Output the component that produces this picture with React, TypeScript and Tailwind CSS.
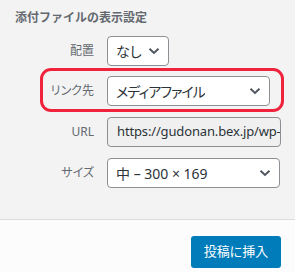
const font = "font-['Noto_Sans','Noto_Sans_CJK_JP',sans-serif]";
const palt = "[font-feature-settings:'palt']";

function Chevron() {
  return (
    <svg width="12" height="8" viewBox="0 0 12 8" className="shrink-0">
      <path d="M1.5 1.8 L6 6 L10.5 1.8" fill="none" stroke="#50575e" strokeWidth="2" />
    </svg>
  );
}

function Select({ value, width, tight = false }: { value: string; width: string; tight?: boolean }) {
  return (
    <div
      className={`flex h-[30px] ${width} items-center justify-between rounded-[4px] border border-[#8c8f94] bg-white pl-[8px] pr-[8px] text-[14px] text-[#2c3338] ${palt}`}
    >
      <span className={`truncate ${tight ? "tracking-[-1px]" : ""}`}>{value}</span>
      <Chevron />
    </div>
  );
}

function Row({ label, children, className = "" }: { label: string; children: React.ReactNode; className?: string }) {
  return (
    <div className={`flex items-center ${className}`}>
      <span className={`w-[94px] text-right text-[12px] text-[#646970] ${palt}`}>{label}</span>
      <div className="ml-[13px]">{children}</div>
    </div>
  );
}

export default function App() {
  return (
    <div className={`relative flex h-[272px] w-[295px] flex-col overflow-hidden bg-[#f3f3f3] ${font}`}>
      <div className="flex-1 border-b border-[#dcdcde] pt-[9px]">
        <h2 className="pl-[15px] text-[12px] font-bold leading-[18px] text-[#646970]">添付ファイルの表示設定</h2>

        <Row label="配置" className="mt-[9px]">
          <Select value="なし" width="w-[62px]" />
        </Row>
        <Row label="リンク先" className="mt-[10px]">
          <Select value="メディアファイル" width="w-[163px]" tight />
        </Row>
        <Row label="URL" className="mt-[11px]">
          <div className="flex h-[30px] w-[174px] items-center overflow-hidden whitespace-nowrap rounded-[4px] border border-[#8c8f94] bg-[#f0f0f1] pl-[9px] text-[13px] tracking-[-0.15px] text-[#2c3338]">
            https://gudonan.bex.jp/wp-
          </div>
        </Row>
        <Row label="サイズ" className="mt-[11px]">
          <Select value="中 – 300 × 169" width="w-[173px]" />
        </Row>
      </div>

      <div className="flex h-[52px] justify-end bg-[#fcfcfc] pr-[14px] pt-[16px]">
        <button className={`h-[32px] w-[90px] rounded-[3px] bg-[#007cba] text-[13px] text-white ${palt}`}>投稿に挿入</button>
      </div>

      <div className="pointer-events-none absolute left-[40px] top-[68px] h-[44px] w-[244px] rounded-[11px] border-[3px] border-[#f0223c]" />
    </div>
  );
}
